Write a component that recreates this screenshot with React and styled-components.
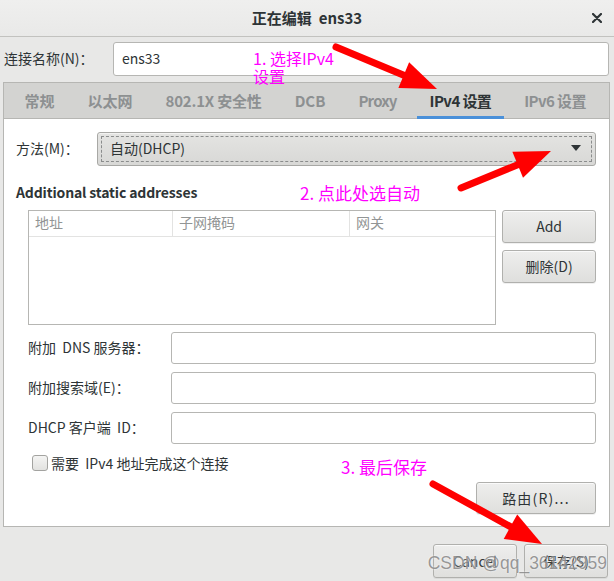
import React from 'react';
import styled, { createGlobalStyle } from 'styled-components';

const Global = createGlobalStyle`
  html, body { margin: 0; padding: 0; }
  body {
    font-family: "Noto Sans CJK SC", "Noto Sans", sans-serif;
    background: #e8e8e7;
  }
`;

const Window = styled.div`
  position: relative;
  width: 614px;
  height: 581px;
  overflow: hidden;
  background: #e8e8e7;
  color: #2e3436;
  font-size: 14px;
  display: flex;
  flex-direction: column;
`;

const TitleBar = styled.header`
  height: 37px;
  box-sizing: border-box;
  display: grid;
  grid-template-columns: 1fr auto 1fr;
  align-items: center;
  background: linear-gradient(#efefee, #e9e9e8);
  border-bottom: 1px solid #c2c2bf;
`;

const Title = styled.div`
  grid-column: 2;
  font-size: 15px;
  font-weight: 700;
  color: #2e3436;
  white-space: pre;
  padding-bottom: 1px;
`;

const CloseButton = styled.div`
  grid-column: 3;
  justify-self: end;
  margin-right: 12px;
  display: flex;
  align-items: center;
`;

const NameRow = styled.div`
  display: flex;
  align-items: center;
  padding: 5px 5px 0 4px;
`;

const RowLabel = styled.label`
  width: ${p => p.$w}px;
  flex: none;
  font-size: 14px;
  color: #2e3436;
  white-space: pre;
  padding-bottom: 2px;
`;

const TextInput = styled.div`
  flex: 1;
  height: ${p => p.$h || 32}px;
  box-sizing: border-box;
  background: #ffffff;
  border: 1px solid #b6b6b3;
  border-radius: 3px;
  display: flex;
  align-items: center;
  padding: 0 0 2px 8px;
  font-size: 14px;
  color: #2e3436;
`;

const Notebook = styled.section`
  margin: 6px 4px 0 3px;
  border: 1px solid #b6b6b3;
  background: #ffffff;
  display: flex;
  flex-direction: column;
`;

const TabBar = styled.nav`
  height: 36px;
  box-sizing: border-box;
  display: flex;
  padding-left: 4px;
  background: #d3d3d1;
  border-bottom: 1px solid #b6b6b3;
`;

const Tab = styled.div`
  position: relative;
  display: flex;
  align-items: center;
  padding: 0 16.5px 1px;
  font-size: 15px;
  font-weight: 700;
  letter-spacing: ${p => p.$ls || 0}px;
  color: ${p => (p.$active ? '#2e3436' : '#8d9091')};
  white-space: pre;
  ${p =>
    p.$active &&
    `&::after {
      content: '';
      position: absolute;
      left: 4px;
      right: 4px;
      bottom: -1px;
      height: 3px;
      background: #4a90d9;
    }`}
`;

const Content = styled.div`
  padding: 13px 13px 12px 12px;
  display: flex;
  flex-direction: column;
`;

const MethodRow = styled.div`
  display: flex;
  align-items: center;
`;

const Combo = styled.div`
  flex: 1;
  height: 34px;
  box-sizing: border-box;
  border: 1px solid #a8a8a5;
  border-radius: 3px;
  background: linear-gradient(#e4e4e2, #d8d8d6);
  box-shadow: inset 0 1px #f2f2f1;
  padding: 3px;
  display: flex;
`;

const ComboFocus = styled.div`
  flex: 1;
  border: 1px dashed #8a8c8c;
  display: flex;
  align-items: center;
  justify-content: space-between;
  padding: 0 10px 2px 8px;
  font-size: 14px;
  color: #2e3436;
`;

const Heading = styled.div`
  margin-top: 16px;
  font-size: 14px;
  font-weight: 700;
  line-height: 20px;
  letter-spacing: -0.15px;
  color: #2e3436;
`;

const AddressBlock = styled.div`
  margin: 8px 0 0 12px;
  display: flex;
  gap: 6px;
  align-items: flex-start;
`;

const Table = styled.div`
  width: 469px;
  height: 115px;
  box-sizing: border-box;
  border: 1px solid #b6b6b3;
  background: #ffffff;
`;

const HeaderRow = styled.div`
  display: grid;
  grid-template-columns: 144px 177px 1fr;
  height: 25px;
  border-bottom: 1px solid #e3e3e2;
`;

const HeaderCell = styled.div`
  display: flex;
  align-items: center;
  padding: 0 0 3px 6px;
  font-size: 14px;
  color: #929595;
  border-right: ${p => (p.$last ? 'none' : '1px solid #e3e3e2')};
`;

const SideButtons = styled.div`
  width: 94px;
  display: flex;
  flex-direction: column;
  gap: 7px;
`;

const Button = styled.div`
  width: ${p => (p.$w ? `${p.$w}px` : 'auto')};
  height: ${p => p.$h || 33}px;
  box-sizing: border-box;
  border: 1px solid #b0b0ad;
  border-radius: 3px;
  background: linear-gradient(#eeeeed, #dfdfdd);
  box-shadow: inset 0 1px #fafafa, 0 1px rgba(0, 0, 0, 0.06);
  display: flex;
  align-items: center;
  justify-content: center;
  padding-bottom: 1px;
  font-size: 14px;
  color: #2e3436;
  letter-spacing: ${p => p.$ls || 0}px;
`;

const Fields = styled.div`
  margin: 7px 0 0 12px;
  display: grid;
  grid-template-columns: 143px 1fr;
  row-gap: 8px;
  align-items: center;
`;

const FieldLabel = styled.div`
  font-size: 14px;
  color: #2e3436;
  white-space: pre;
  padding-bottom: 2px;
`;

const CheckRow = styled.label`
  margin: 11px 0 0 16px;
  height: 16px;
  line-height: 16px;
  display: flex;
  align-items: center;
  gap: 3px;
  font-size: 14px;
  color: #2e3436;
  white-space: pre;
`;

const CheckBox = styled.span`
  width: 16px;
  height: 16px;
  box-sizing: border-box;
  border: 1px solid #a3a3a0;
  border-radius: 3px;
  background: linear-gradient(#f4f4f3, #e2e2e0);
`;

const RouteRow = styled.div`
  margin-top: 11px;
  display: flex;
  justify-content: flex-end;
`;

const Footer = styled.footer`
  margin-top: 17px;
  padding-right: 6px;
  display: flex;
  justify-content: flex-end;
  gap: 7px;
`;

const Note = styled.div`
  position: absolute;
  left: ${p => p.$x}px;
  top: ${p => p.$y}px;
  font-size: ${p => p.$size || 17}px;
  line-height: ${p => p.$lh || 22}px;
  color: #ff00ff;
  white-space: pre;
  pointer-events: none;
`;

const Overlay = styled.svg`
  position: absolute;
  left: 0;
  top: 0;
  pointer-events: none;
`;

const Watermark = styled.div`
  position: absolute;
  right: 7px;
  bottom: 7px;
  font-family: "Liberation Sans", "Noto Sans", sans-serif;
  font-size: 17.5px;
  color: rgba(120, 120, 120, 0.75);
  text-shadow: 0 0 2px rgba(255, 255, 255, 0.9);
  white-space: pre;
  pointer-events: none;
`;

function Arrow({ x1, y1, x2, y2, L = 36, W = 14 }) {
  const dx = x2 - x1;
  const dy = y2 - y1;
  const len = Math.hypot(dx, dy);
  const ux = dx / len;
  const uy = dy / len;
  const bx = x2 - ux * L;
  const by = y2 - uy * L;
  const nx = -uy;
  const ny = ux;
  const pts = `${x2},${y2} ${bx + nx * W},${by + ny * W} ${bx - nx * W},${by - ny * W}`;
  return (
    <g>
      <line x1={x1} y1={y1} x2={bx + ux * 4} y2={by + uy * 4} stroke="#ff0000" strokeWidth="7" strokeLinecap="round" />
      <polygon points={pts} fill="#ff0000" />
    </g>
  );
}

const tabs = [
  { label: '常规' },
  { label: '以太网' },
  { label: '802.1X 安全性', ls: -0.2 },
  { label: 'DCB' },
  { label: 'Proxy', ls: -0.8 },
  { label: 'IPv4 设置', ls: -0.6, active: true },
  { label: 'IPv6 设置', ls: -0.6 },
];

export default function App() {
  return (
    <>
      <Global />
      <Window>
        <TitleBar>
          <Title>正在编辑  ens33</Title>
          <CloseButton>
            <svg width="10" height="10" viewBox="0 0 10 10">
              <path d="M1 1 L9 9 M9 1 L1 9" stroke="#2e3436" strokeWidth="2.2" strokeLinecap="round" />
            </svg>
          </CloseButton>
        </TitleBar>

        <NameRow>
          <RowLabel $w={109}>连接名称(N)：</RowLabel>
          <TextInput $h={34}>ens33</TextInput>
        </NameRow>

        <Notebook>
          <TabBar>
            {tabs.map(t => (
              <Tab key={t.label} $active={t.active} $ls={t.ls}>{t.label}</Tab>
            ))}
          </TabBar>
          <Content>
            <MethodRow>
              <RowLabel $w={81}>方法(M)：</RowLabel>
              <Combo>
                <ComboFocus>
                  <span>自动(DHCP)</span>
                  <svg width="10" height="6" viewBox="0 0 10 6">
                    <polygon points="0,0 10,0 5,6" fill="#2e3436" />
                  </svg>
                </ComboFocus>
              </Combo>
            </MethodRow>

            <Heading>Additional static addresses</Heading>

            <AddressBlock>
              <Table>
                <HeaderRow>
                  <HeaderCell>地址</HeaderCell>
                  <HeaderCell>子网掩码</HeaderCell>
                  <HeaderCell $last>网关</HeaderCell>
                </HeaderRow>
              </Table>
              <SideButtons>
                <Button>Add</Button>
                <Button>删除(D)</Button>
              </SideButtons>
            </AddressBlock>

            <Fields>
              <FieldLabel>附加  DNS 服务器：</FieldLabel>
              <TextInput $h={32} />
              <FieldLabel>附加搜索域(E)：</FieldLabel>
              <TextInput $h={32} />
              <FieldLabel>DHCP 客户端  ID：</FieldLabel>
              <TextInput $h={32} />
            </Fields>

            <CheckRow>
              <CheckBox />
              需要  IPv4 地址完成这个连接
            </CheckRow>

            <RouteRow>
              <Button $w={120} $h={32} $ls={1.2}>路由(R)...</Button>
            </RouteRow>
          </Content>
        </Notebook>

        <Footer>
          <Button $w={84} $h={34}>Cancel</Button>
          <Button $w={84} $h={34}>保存(S)</Button>
        </Footer>

        <Note $x={253} $y={49} $size={16} $lh={18}>{'1. 选择IPv4\n设置'}</Note>
        <Note $x={300} $y={182}>2. 点此处选自动</Note>
        <Note $x={341} $y={456}>3. 最后保存</Note>

        <Overlay width="614" height="581" viewBox="0 0 614 581">
          <Arrow x1={336} y1={47} x2={437} y2={89} />
          <Arrow x1={461} y1={188} x2={551} y2={151} />
          <Arrow x1={433} y1={484} x2={542} y2={544} />
        </Overlay>

        <Watermark>CSDN @qq_36142959</Watermark>
      </Window>
    </>
  );
}
